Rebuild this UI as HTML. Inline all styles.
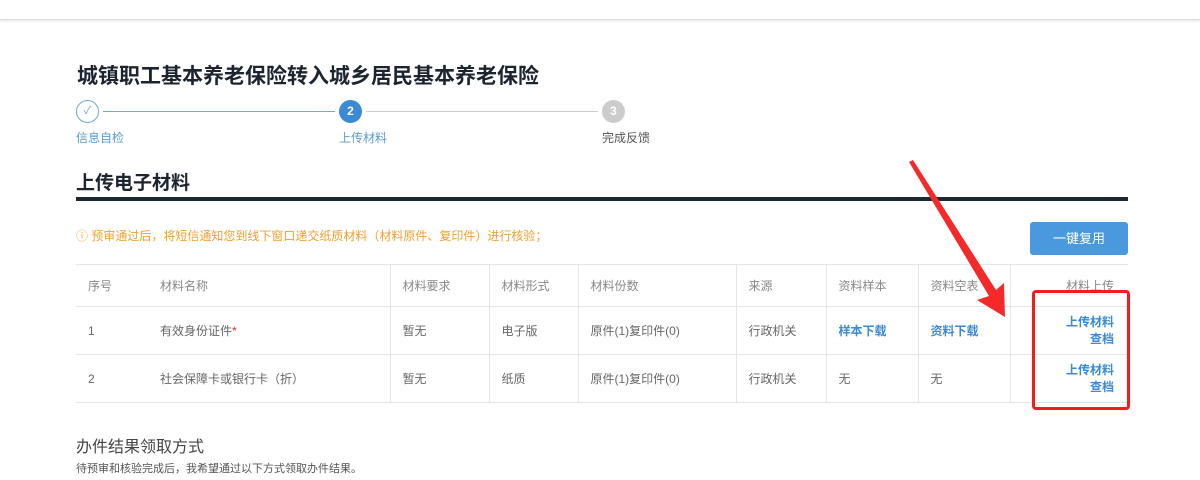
<!DOCTYPE html>
<html><head><meta charset="utf-8"><style>
*{margin:0;padding:0;box-sizing:border-box}
body{width:1200px;height:480px;background:#fff;position:relative;overflow:hidden;font-family:"Liberation Sans","Noto Sans CJK SC",sans-serif;color:#333}
.a{position:absolute;white-space:nowrap}
table{position:absolute;left:76px;top:264px;width:1052px;border-collapse:collapse;font-size:12px}
td{border-top:1px solid #e6e6e6;border-bottom:1px solid #e6e6e6;height:48px;padding-left:12px;color:#666;vertical-align:middle}
td.l{border-left:1px solid #e6e6e6}
tr.h td{height:42px;color:#888}
.b{color:#3a8ad6;font-weight:bold}
</style></head><body>
<div class="a" style="left:0;top:0;width:1200px;height:20px;border-bottom:1px solid #ddd;box-shadow:0 1px 3px #e4e4e4"></div>
<div class="a" style="left:77px;top:60px;font-size:21px;font-weight:bold;color:#1c2430">城镇职工基本养老保险转入城乡居民基本养老保险</div>
<!-- steps -->
<div class="a" style="left:76px;top:100px;width:23px;height:23px;border:1px solid #6fa8dc;border-radius:50%;color:#6fa8dc;font-size:11px;text-align:center;line-height:21px">✓</div>
<div class="a" style="left:103px;top:111px;width:232px;height:1px;background:#6fa8dc"></div>
<div class="a" style="left:339px;top:100px;width:23px;height:23px;background:#3a8ad6;border-radius:50%;color:#fff;font-size:12px;font-weight:bold;text-align:center;line-height:23px">2</div>
<div class="a" style="left:366px;top:111px;width:232px;height:1px;background:#ccc"></div>
<div class="a" style="left:602px;top:100px;width:23px;height:23px;background:#ccc;border-radius:50%;color:#fff;font-size:12px;font-weight:bold;text-align:center;line-height:23px">3</div>
<div class="a" style="left:76px;top:129px;font-size:12px;color:#5a9bd5">信息自检</div>
<div class="a" style="left:339px;top:129px;font-size:12px;color:#5a9bd5">上传材料</div>
<div class="a" style="left:602px;top:129px;font-size:12px;color:#555">完成反馈</div>
<div class="a" style="left:76px;top:168px;font-size:19px;font-weight:bold;color:#1c2430">上传电子材料</div>
<div class="a" style="left:76px;top:197px;width:1052px;height:4px;background:#1c2833"></div>
<div class="a" style="left:76px;top:227px;font-size:12px;color:#f0a030">ⓘ 预审通过后，将短信通知您到线下窗口递交纸质材料（材料原件、复印件）进行核验；</div>
<div class="a" style="left:1030px;top:222px;width:98px;height:33px;background:#4a98de;border-radius:3px;color:#fff;font-size:13px;text-align:center;line-height:33px">一键复用</div>
<table>
<tr class="h"><td style="width:72px">序号</td><td style="width:242px">材料名称</td><td class="l" style="width:99px">材料要求</td><td class="l" style="width:89px">材料形式</td><td class="l" style="width:158px">材料份数</td><td class="l" style="width:90px">来源</td><td class="l" style="width:92px">资料样本</td><td class="l" style="width:92px">资料空表</td><td class="l" style="text-align:right;padding-right:14px">材料上传</td></tr>
<tr><td>1</td><td>有效身份证件<span style="color:#e22">*</span></td><td class="l">暂无</td><td class="l">电子版</td><td class="l">原件(1)复印件(0)</td><td class="l">行政机关</td><td class="l b">样本下载</td><td class="l b">资料下载</td><td class="l b" style="text-align:right;padding-right:14px;line-height:17px">上传材料<br>查档</td></tr>
<tr><td>2</td><td>社会保障卡或银行卡（折）</td><td class="l">暂无</td><td class="l">纸质</td><td class="l">原件(1)复印件(0)</td><td class="l">行政机关</td><td class="l">无</td><td class="l">无</td><td class="l b" style="text-align:right;padding-right:14px;line-height:17px">上传材料<br>查档</td></tr>
</table>
<div class="a" style="left:76px;top:433px;font-size:16px;color:#444">办件结果领取方式</div>
<div class="a" style="left:76px;top:460px;font-size:11px;color:#555">待预审和核验完成后，我希望通过以下方式领取办件结果。</div>
<div class="a" style="left:1032px;top:290px;width:98px;height:120px;border:3px solid #f21c1c;border-radius:4px"></div>
<svg class="a" style="left:0;top:0" width="1200" height="480"><polygon points="909,162 913,160 996,290 1004,283 1005,317 977,300 989,296" fill="#f42a2a"/></svg>
</body></html>
